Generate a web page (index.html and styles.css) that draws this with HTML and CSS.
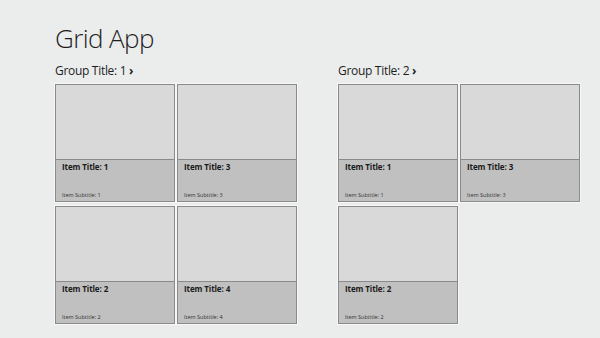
FILE: index.html
```html
<!DOCTYPE html>
<html>
<head>
<meta charset="utf-8">
<link rel="stylesheet" href="styles.css">
</head>
<body>
<div class="page">
  <h1 class="app-title">Grid App</h1>
  <div class="groups">
    <section class="group">
      <h2 class="group-title">Group Title: 1 <span class="chev">›</span></h2>
      <div class="grid">
        <div class="tile"><div class="img"></div><div class="info"><div class="t">Item Title: 1</div><div class="s">Item Subtitle: 1</div></div></div>
        <div class="tile"><div class="img"></div><div class="info"><div class="t">Item Title: 3</div><div class="s">Item Subtitle: 3</div></div></div>
        <div class="tile"><div class="img"></div><div class="info"><div class="t">Item Title: 2</div><div class="s">Item Subtitle: 2</div></div></div>
        <div class="tile"><div class="img"></div><div class="info"><div class="t">Item Title: 4</div><div class="s">Item Subtitle: 4</div></div></div>
      </div>
    </section>
    <section class="group">
      <h2 class="group-title">Group Title: 2 <span class="chev">›</span></h2>
      <div class="grid">
        <div class="tile"><div class="img"></div><div class="info"><div class="t">Item Title: 1</div><div class="s">Item Subtitle: 1</div></div></div>
        <div class="tile"><div class="img"></div><div class="info"><div class="t">Item Title: 3</div><div class="s">Item Subtitle: 3</div></div></div>
        <div class="tile"><div class="img"></div><div class="info"><div class="t">Item Title: 2</div><div class="s">Item Subtitle: 2</div></div></div>
      </div>
    </section>
  </div>
</div>
</body>
</html>
```
FILE: styles.css
```css
html, body {
  margin: 0;
  padding: 0;
  background: #ebecec;
  height: 100%;
  overflow: hidden;
}
.page {
  padding: 20px 0 0 55px;
  font-family: "Open Sans", "Noto Sans", sans-serif;
  color: #1e1e1e;
}
.app-title {
  margin: 0;
  font-size: 26px;
  font-weight: 300;
  line-height: 36px;
  letter-spacing: -0.6px;
}
.groups {
  display: flex;
  gap: 41px;
  margin-top: 7px;
}
.group-title {
  margin: 0 0 5px 0;
  font-size: 12px;
  font-weight: 400;
  line-height: 16px;
  letter-spacing: -0.3px;
}
.chev {
  font-weight: 700;
}
.grid {
  display: grid;
  grid-template-columns: 120px 120px;
  grid-auto-rows: 118px;
  gap: 4px 2px;
}
.tile {
  box-sizing: border-box;
  border: 1px solid #8a8a8a;
  box-shadow: 0 0 0 1px #f7f7f7;
  display: flex;
  flex-direction: column;
  background: #d9d9d9;
}
.img {
  height: 74px;
  border-bottom: 1px solid #8a8a8a;
  background: #d9d9d9;
}
.info {
  flex: 1;
  background: #c0c0c0;
  display: flex;
  flex-direction: column;
  justify-content: space-between;
  padding: 2px 6px 2px 6px;
}
.t {
  font-size: 8px;
  font-weight: 700;
  line-height: 10px;
  color: #1a1a1a;
  letter-spacing: -0.1px;
}
.s {
  font-size: 5.5px;
  line-height: 7px;
  color: #333;
}
```
